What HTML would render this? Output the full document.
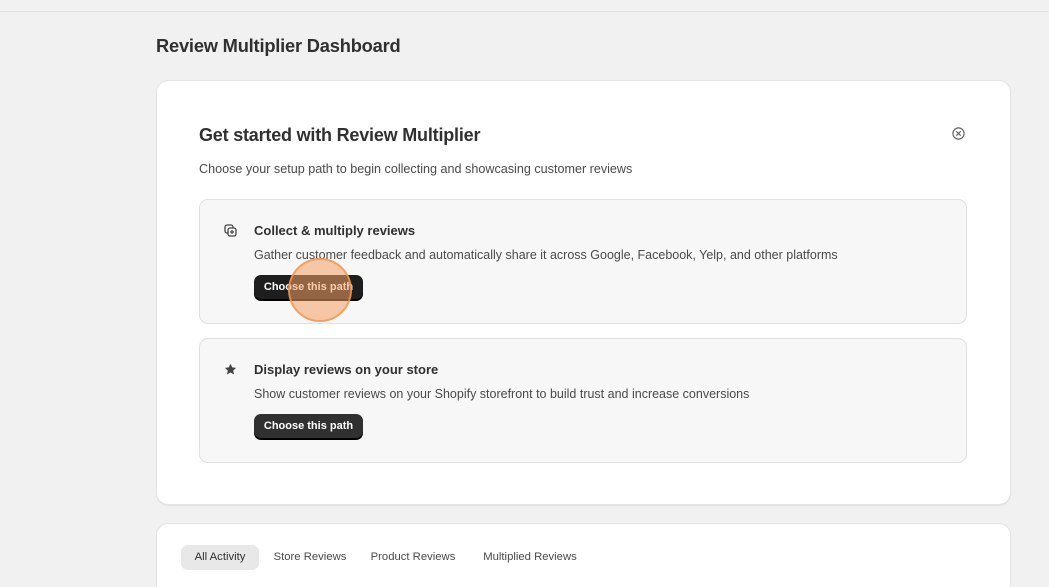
<!DOCTYPE html>
<html style="width:1049px;height:587px;overflow:hidden"><head><style>
*{margin:0;padding:0;box-sizing:border-box}
body{width:1049px;height:587px;overflow:hidden;background:#f1f1f1;font-family:"Liberation Sans",sans-serif;color:#303030;position:relative}
.topline{position:absolute;left:0;top:11px;width:1049px;height:1px;background:#e3e3e3}
h1{position:absolute;left:156px;top:35px;font-size:18.3px;font-weight:bold;color:#303030;letter-spacing:-0.2px}
.card{position:absolute;left:156px;width:855px;background:#fff;border-radius:12px;border:1px solid #e3e3e3;box-shadow:0 1px 0 rgba(0,0,0,.05)}
.c1{top:80px;height:425px}
.c2{top:523px;height:64px;border-bottom:none;border-radius:12px 12px 0 0;box-shadow:none}
h2{position:absolute;left:42px;top:44px;font-size:18px;font-weight:bold;letter-spacing:-0.2px}
.sub{position:absolute;left:42px;top:81px;font-size:12.6px;color:#4a4a4a}
.x{position:absolute;left:795px;top:46px}
.box{position:absolute;left:42px;width:768px;height:125px;background:#f7f7f7;border:1px solid #e0e0e0;border-radius:9px}
.b1{top:118px}.b2{top:257px}
.ic{position:absolute;left:24px;top:24px}
.bt{position:absolute;left:54px;top:23px;font-size:13px;font-weight:bold;color:#303030}
.bd{position:absolute;left:54px;top:48px;font-size:12.5px;color:#4a4a4a}
.btn{position:absolute;left:54px;top:75px;width:109px;height:25px;background:#303030;border-radius:7px;color:#fff;font-size:11px;font-weight:bold;text-align:center;line-height:24px;box-shadow:inset 0 -1px 0 #000,0 1px 0 #000}
.b1 .btn{background:#1e1e1e}
.tab{position:absolute;top:21px;height:25px;line-height:25px;border-radius:7px;color:#4a4a4a;font-size:11.3px;text-align:center}
.tab.a{background:#e8e8e8;color:#303030}
.dot{position:absolute;left:288px;top:258px;width:64px;height:64px;border-radius:50%;background:rgba(245,160,100,.55);border:2px solid rgba(240,150,80,.8)}
</style></head><body>
<div class="topline"></div>
<h1>Review Multiplier Dashboard</h1>
<div class="card c1">
<h2>Get started with Review Multiplier</h2>
<div class="sub">Choose your setup path to begin collecting and showcasing customer reviews</div>
<svg class="x" width="13" height="13" viewBox="0 0 13 13"><circle cx="6.5" cy="6.5" r="5.6" fill="none" stroke="#666" stroke-width="1.2"/><path d="M4.3 4.3L8.7 8.7M8.7 4.3L4.3 8.7" stroke="#666" stroke-width="1.2"/></svg>
<div class="box b1">
<svg class="ic" width="13" height="13" viewBox="0 0 13 13"><rect x="1" y="1" width="8" height="8" rx="2" fill="none" stroke="#444" stroke-width="1.3"/><rect x="4" y="4" width="8" height="8" rx="2" fill="#f7f7f7" stroke="#444" stroke-width="1.3"/><path d="M8 6v4M6 8h4" stroke="#444" stroke-width="1.2"/></svg>
<div class="bt">Collect &amp; multiply reviews</div>
<div class="bd">Gather customer feedback and automatically share it across Google, Facebook, Yelp, and other platforms</div>
<div class="btn">Choose this path</div>
</div>
<div class="box b2">
<svg class="ic" width="13" height="13" viewBox="0 0 13 13"><path d="M6.5 0.8l1.7 3.6 3.9.5-2.9 2.7.8 3.9-3.5-2-3.5 2 .8-3.9L.9 4.9l3.9-.5z" fill="#444"/></svg>
<div class="bt">Display reviews on your store</div>
<div class="bd">Show customer reviews on your Shopify storefront to build trust and increase conversions</div>
<div class="btn">Choose this path</div>
</div>
</div>
<div class="card c2">
<div class="tab a" style="left:24px;width:78px">All Activity</div>
<div class="tab" style="left:110px;width:86px">Store Reviews</div>
<div class="tab" style="left:206px;width:100px">Product Reviews</div>
<div class="tab" style="left:318px;width:110px">Multiplied Reviews</div>
</div>
<div class="dot"></div>
</body></html>
